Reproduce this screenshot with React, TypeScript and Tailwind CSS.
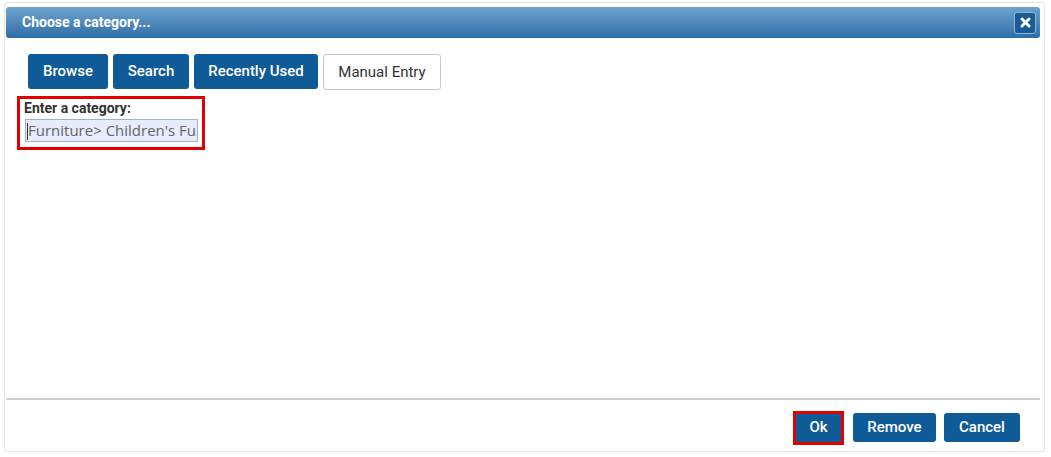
import { ReactNode } from "react";

type BtnProps = {
    children: ReactNode
    className?: string
}

function BlueButton({ children, className = "" }: BtnProps) {
    return (
        <button className={"h-[29px] rounded-[3px] bg-[#0f5b97] text-[15px] font-medium text-white " + className}>
            {children}
        </button>
    );
}

export default function App() {
    return (
        <div className="w-[1051px] h-[457px] bg-white pt-[2px] pl-[4px]" style={{ fontFamily: "Roboto, 'Liberation Sans', sans-serif" }}>
            <div className="w-[1041px] h-[450px] border border-[#e4e4e4] rounded-[3px] flex flex-col">
                {/* title bar */}
                <div className="relative ml-[1px] mr-[4px] mt-[4px] h-[31px] rounded-[3px] bg-gradient-to-b from-[#6fa2ce] via-[#4f89bb] to-[#2d6ea6] flex items-center justify-between pl-[16px] pr-[4px]">
                    <span className="text-[14px] font-bold text-white">Choose a category...</span>
                    <div className="w-[22px] h-[22px] rounded-[3px] bg-[#195c98] border border-[#8eb3d5] flex items-center justify-center">
                        <svg width="11" height="11" viewBox="0 0 12 12">
                            <path d="M2.2 2.2 L9.8 9.8 M9.8 2.2 L2.2 9.8" stroke="white" strokeWidth="3.2" strokeLinecap="round" />
                        </svg>
                    </div>
                </div>

                {/* tabs */}
                <div className="flex gap-[5px] ml-[23px] mt-[16px]">
                    <BlueButton className="w-[80px] h-[35px]">Browse</BlueButton>
                    <BlueButton className="w-[76px] h-[35px]">Search</BlueButton>
                    <BlueButton className="w-[124px] h-[35px]">Recently Used</BlueButton>
                    <button className="w-[118px] h-[36px] rounded-[3px] bg-white border border-[#c6c6c6] text-[15px] text-[#333]">Manual Entry</button>
                </div>

                {/* manual entry */}
                <div className="ml-[12px] mt-[6px] w-[188px] h-[54px] border-[3px] border-[#e20000] pl-[4px] pt-[1px]">
                    <div className="text-[14px] font-bold text-[#333] leading-[16px]">Enter a category:</div>
                    <div className="mt-[3px] ml-[1px] w-[173px] h-[23px] border border-[#9fb3d1] bg-[#e8ebfb] overflow-hidden whitespace-nowrap pl-[1px] text-[15px] leading-[21px] text-[#666]" style={{ fontFamily: "'Open Sans', 'Noto Sans', sans-serif" }}>
                        <span className="inline-block w-px h-[17px] bg-[#333] align-middle"></span>Furniture&gt; Children's Furniture
                    </div>
                </div>

                <div className="flex-1"></div>

                {/* footer */}
                <div className="ml-[1px] mr-[4px] h-[2px] bg-[#cfcfcf]"></div>
                <div className="flex items-center justify-end gap-[8px] pr-[24px] pt-[4px] h-[51px]">
                    <div className="border-[3px] border-[#e20000] mr-[1px]">
                        <button className="block w-[45px] h-[28px] bg-[#0f5b97] text-[15px] font-medium text-white">Ok</button>
                    </div>
                    <BlueButton className="w-[83px]">Remove</BlueButton>
                    <BlueButton className="w-[76px]">Cancel</BlueButton>
                </div>
            </div>
        </div>
    );
}
